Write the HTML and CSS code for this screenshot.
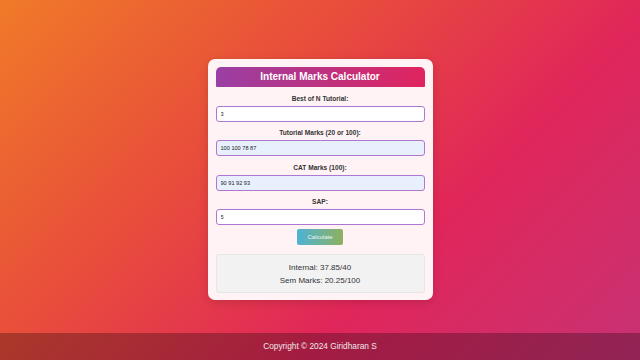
FILE: index.html
```html
<!DOCTYPE html>
<html lang="en">
<head>
    <meta charset="UTF-8">
    <meta name="viewport" content="width=device-width, initial-scale=1.0">
    <title>Internal Marks Calculator</title>
    <link rel="stylesheet" href="styles.css">
</head>
<body>

    <main class="page__main">
        <div class="calc__card">
            <h1 class="calc__title">Internal Marks Calculator</h1>

            <form class="calc__form">
                <div class="calc__zone">
                    <label for="bestN">Best of N Tutorial:</label>
                    <input type="text" id="bestN" value="3">
                </div>
                <div class="calc__zone">
                    <label for="tutorial">Tutorial Marks (20 or 100):</label>
                    <input type="text" id="tutorial" class="filled" value="100 100 78 87">
                </div>
                <div class="calc__zone">
                    <label for="cat">CAT Marks (100):</label>
                    <input type="text" id="cat" class="filled" value="90 91 92 93">
                </div>
                <div class="calc__zone">
                    <label for="sap">SAP:</label>
                    <input type="text" id="sap" value="5">
                </div>
                <button type="button" class="calc__button">Calculate</button>
            </form>

            <div class="calc__result">
                <p>Internal: 37.85/40</p>
                <p>Sem Marks: 20.25/100</p>
            </div>
        </div>
    </main>

    <footer class="page__footer">
        Copyright &copy; 2024 Giridharan S
    </footer>

</body>
</html>
```

FILE: styles.css
```css
html, body {
    height: 100%;
}

body {
    margin: 0;
    font-family: "Liberation Sans", Arial, sans-serif;
    background: linear-gradient(135deg, #f07a28 0%, #e84c3c 36%, #e0265a 66%, #c83274 100%);
    display: flex;
    flex-direction: column;
}

.page__main {
    flex: 1;
    display: flex;
    justify-content: center;
    align-items: flex-start;
    padding-top: 59px;
}

.calc__card {
    width: 209px;
    padding: 8px 8px 7px;
    background-color: #fff3f5;
    border-radius: 7px;
    box-shadow: 0 2px 10px rgba(0, 0, 0, 0.15);
    display: flex;
    flex-direction: column;
}

.calc__title {
    margin: 0;
    height: 20px;
    line-height: 20px;
    font-size: 10px;
    font-weight: bold;
    text-align: center;
    color: #fff;
    background: linear-gradient(90deg, #9a3fa4, #e0245e);
    border-radius: 5px 5px 1px 1px;
}

.calc__form {
    display: flex;
    flex-direction: column;
    align-items: center;
    margin-top: 8px;
}

.calc__zone {
    width: 100%;
    display: flex;
    flex-direction: column;
    margin-bottom: 7.4px;
}

.calc__zone label {
    font-size: 6.6px;
    line-height: 8px;
    font-weight: bold;
    text-align: center;
    color: #333;
    margin-bottom: 3px;
}

.calc__zone input {
    box-sizing: border-box;
    height: 16px;
    width: 100%;
    padding: 0 4px;
    font-family: "Liberation Sans", Arial, sans-serif;
    font-size: 5.6px;
    color: #222;
    background-color: #fff;
    border: 1px solid #ae78d2;
    border-radius: 3px;
}

.calc__zone input.filled {
    background-color: #e8f0fe;
}

.calc__zone:last-of-type {
    margin-bottom: 4px;
}

.calc__button {
    width: 46px;
    height: 16px;
    padding: 0;
    font-family: "Liberation Sans", Arial, sans-serif;
    font-size: 6px;
    color: #eef6f8;
    background: linear-gradient(90deg, #4cb3d6, #8fb05f);
    border: none;
    border-radius: 2px;
    cursor: pointer;
}

.calc__result {
    margin-top: 9px;
    height: 37px;
    background-color: #f2f2f2;
    border: 1px solid #e6e6e6;
    border-radius: 3px;
    display: flex;
    flex-direction: column;
    justify-content: center;
    align-items: center;
    gap: 4px;
}

.calc__result p {
    margin: 0;
    font-size: 8px;
    line-height: 9px;
    color: #333;
}

.page__footer {
    height: 27px;
    line-height: 27px;
    text-align: center;
    font-size: 8.3px;
    color: #f2e6ea;
    background-color: rgba(0, 0, 0, 0.27);
}
```
